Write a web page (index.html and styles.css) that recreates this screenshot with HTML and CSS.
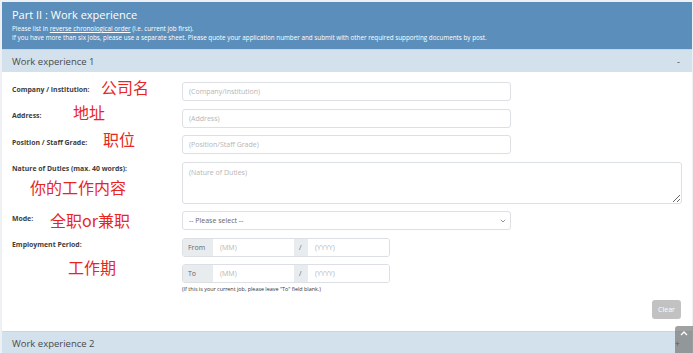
FILE: index.html
```html
<!DOCTYPE html>
<html lang="en">
<head>
  <meta charset="UTF-8" />
  <title>Part II : Work experience</title>
  <meta name="viewport" content="width=device-width, initial-scale=1.0"/>
  <link rel="stylesheet" href="styles.css">
</head>
<body>
  <div class="card">
    <div class="card-header">
      <h1>Part II : Work experience</h1>
      <p>Please list in <u>reverse chronological order</u> (i.e. current job first).</p>
      <p>If you have more than six jobs, please use a separate sheet. Please quote your application number and submit with other required supporting documents by post.</p>
    </div>

    <div class="panel-heading">
      <span>Work experience 1</span>
      <span class="toggle">-</span>
    </div>
    <form class="panel-body" id="workForm1">
      <div class="row">
        <label class="label" for="company">Company / Institution:<span class="note note-company">公司名</span></label>
        <input class="field short" type="text" id="company" placeholder="(Company/Institution)" />
      </div>
      <div class="row">
        <label class="label" for="address">Address:<span class="note note-address">地址</span></label>
        <input class="field short" type="text" id="address" placeholder="(Address)" />
      </div>
      <div class="row">
        <label class="label" for="position">Position / Staff Grade:<span class="note note-position">职位</span></label>
        <input class="field short" type="text" id="position" placeholder="(Position/Staff Grade)" />
      </div>
      <div class="row">
        <label class="label" for="duties">Nature of Duties (max. 40 words):<span class="note note-duties">你的工作内容</span></label>
        <textarea class="field area" id="duties" placeholder="(Nature of Duties)"></textarea>
      </div>
      <div class="row">
        <label class="label" for="mode">Mode:<span class="note note-mode">全职or兼职</span></label>
        <div class="select-wrap">
          <select class="field short select" id="mode">
            <option value="">-- Please select --</option>
            <option value="full">Full-time</option>
            <option value="part">Part-time</option>
          </select>
          <svg class="chevron" width="6" height="4" viewBox="0 0 6 4"><path d="M0.8 0.8 L3 3 L5.2 0.8" fill="none" stroke="#888" stroke-width="0.9"/></svg>
        </div>
      </div>
      <div class="row">
        <label class="label">Employment Period:<span class="note note-period">工作期</span></label>
        <div class="dates">
          <div class="date-group">
            <span class="addon addon-word">From</span>
            <input class="date-input" type="text" placeholder="(MM)" />
            <span class="addon addon-slash">/</span>
            <input class="date-input" type="text" placeholder="(YYYY)" />
          </div>
          <div class="date-group">
            <span class="addon addon-word">To</span>
            <input class="date-input" type="text" placeholder="(MM)" />
            <span class="addon addon-slash">/</span>
            <input class="date-input" type="text" placeholder="(YYYY)" />
          </div>
          <div class="help">(If this is your current job, please leave "To" field blank.)</div>
        </div>
      </div>
      <div class="actions">
        <button type="reset" class="btn-clear">Clear</button>
      </div>
    </form>

    <div class="panel-heading">
      <span>Work experience 2</span>
      <span class="toggle">+</span>
    </div>
  </div>

  <a class="to-top" href="#">
    <svg width="8" height="5" viewBox="0 0 8 5"><path d="M1 4 L4 1 L7 4" fill="none" stroke="#fff" stroke-width="1.3"/></svg>
  </a>
</body>
</html>
```

FILE: styles.css
```css
:root {
  --blue: #5b8eba;
  --blue-light: #d3e1ec;
  --bg: #eef0f3;
  --text: #3a3a3a;
  --muted: #b5b5b5;
  --border: #dcdfe3;
  --red: #e8261f;
}
body {
  font-family: "Open Sans", Lato, sans-serif;
  background-color: var(--bg);
  color: var(--text);
  margin: 0;
  padding: 2px 1px 0 2px;
}
.card {
  background: #fff;
}
.card-header {
  background-color: var(--blue);
  color: #fff;
  padding: 6px 10px 5px;
  height: 36px;
}
.card-header h1 {
  font-size: 11px;
  font-weight: 400;
  margin: 0 0 3px;
  line-height: 13px;
}
.card-header p {
  font-size: 6.3px;
  margin: 0;
  line-height: 9px;
}
.panel-heading {
  background-color: var(--blue-light);
  border-top: 1px solid #c5d6e4;
  color: #4a4a4a;
  font-size: 9.5px;
  height: 22px;
  padding: 0 12px 0 10px;
  display: flex;
  justify-content: space-between;
  align-items: center;
}
.toggle {
  font-size: 9px;
  color: #444;
}
.panel-body {
  padding: 10px 10px 12px 10px;
  margin: 0;
}
.row {
  display: grid;
  grid-template-columns: 170px 1fr;
  margin-bottom: 7.5px;
}
.label {
  position: relative;
  font-size: 6.9px;
  font-weight: 700;
  color: #3d3d3d;
  padding-top: 2.5px;
  line-height: 9px;
}
.note {
  position: absolute;
  font-family: "Noto Sans CJK SC", sans-serif;
  font-weight: 400;
  font-size: 16px;
  line-height: 18px;
  color: var(--red);
  white-space: nowrap;
}
.note-company { left: 89px; top: -4px; }
.note-address { left: 61px; top: -6px; }
.note-position { left: 91px; top: -5px; }
.note-duties { left: 18px; top: 16px; }
.note-mode { left: 38px; top: 0px; }
.note-period { left: 56px; top: 20px; }
.field {
  font-family: "Open Sans", Lato, sans-serif;
  font-size: 7px;
  color: var(--text);
  border: 1px solid var(--border);
  border-radius: 3px;
  background: #fff;
  padding: 0 6px;
  box-sizing: border-box;
  height: 19px;
  outline: none;
}
.field::placeholder, .date-input::placeholder {
  color: var(--muted);
}
.short {
  width: 329px;
}
.area {
  width: 500px;
  height: 42px;
  padding-top: 5px;
  resize: vertical;
}
.select-wrap {
  position: relative;
  width: 329px;
}
.select {
  appearance: none;
  -webkit-appearance: none;
  color: #666;
  padding-left: 6px;
  display: block;
}
.chevron {
  position: absolute;
  right: 5px;
  top: 8px;
}
.dates {
  display: flex;
  flex-direction: column;
  gap: 7.5px;
}
.date-group {
  display: flex;
  width: 208px;
  height: 19px;
  border: 1px solid var(--border);
  border-radius: 3px;
  box-sizing: border-box;
  overflow: hidden;
}
.addon {
  background: #e9ecef;
  color: #666;
  font-size: 7px;
  display: flex;
  align-items: center;
  padding-left: 5px;
}
.addon-word {
  width: 25px;
}
.addon-slash {
  width: 9px;
}
.date-input {
  border: none;
  font-family: "Open Sans", Lato, sans-serif;
  font-size: 7px;
  padding: 0 7px;
  width: 82px;
  min-width: 0;
  flex: 1;
  outline: none;
}
.help {
  font-size: 5.4px;
  color: #333;
  margin-top: -6px;
}
.actions {
  display: flex;
  justify-content: flex-end;
  padding-right: 1px;
  margin-top: 3px;
}
.btn-clear {
  background: #c2c2c2;
  color: #fff;
  border: none;
  border-radius: 3px;
  font-family: "Open Sans", Lato, sans-serif;
  font-size: 7px;
  width: 29px;
  height: 19px;
  padding: 0;
}
.to-top {
  position: fixed;
  right: 0;
  bottom: 0;
  width: 18px;
  height: 27px;
  background: rgba(110, 110, 110, 0.65);
  border-radius: 3px 0 0 0;
  display: flex;
  justify-content: center;
  padding-top: 5px;
  box-sizing: border-box;
}
```
